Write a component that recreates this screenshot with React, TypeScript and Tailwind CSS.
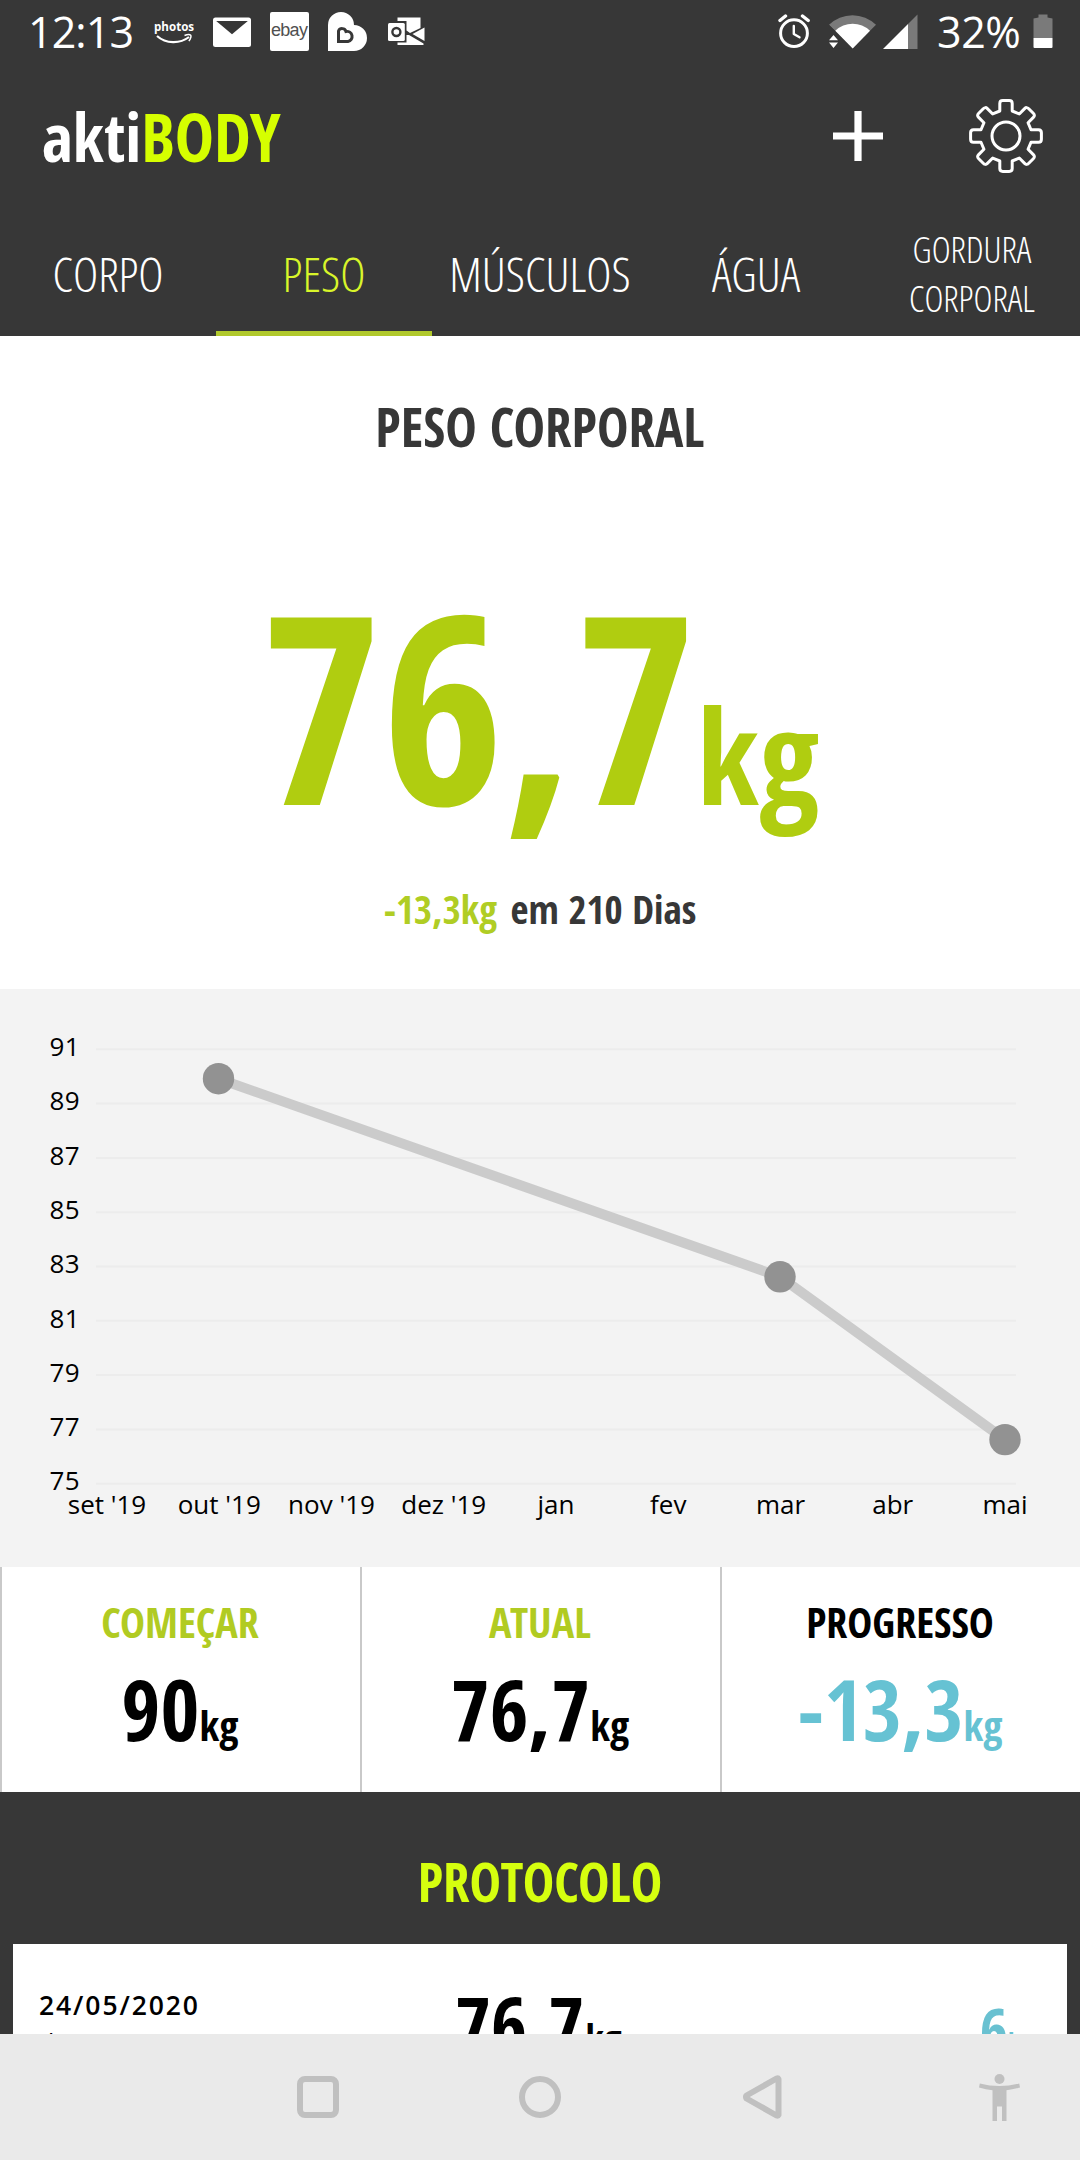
import type { ReactNode } from 'react'

const tabs = [
  { label: 'CORPO' },
  { label: 'PESO', active: true },
  { label: 'MÚSCULOS' },
  { label: 'ÁGUA' },
  { label: 'GORDURA CORPORAL', small: true },
]

const months = ["set '19", "out '19", "nov '19", "dez '19", 'jan', 'fev', 'mar', 'abr', 'mai']
const levels = [91, 89, 87, 85, 83, 81, 79, 77, 75]
const points = [
  { x: 218.5, y: 89.7 },
  { x: 780, y: 287.8 },
  { x: 1005, y: 450.6 },
]

// Outline of an eight-toothed cog centred on 0,0
function gearPath() {
  const tooth = [
    [-6.2, -25],
    [-6.2, -32.5],
    [-6.2, -35.4],
    [-3.2, -35.4],
    [3.2, -35.4],
    [6.2, -35.4],
    [6.2, -32.5],
    [6.2, -25],
  ]
  let d = ''
  for (let i = 0; i < 8; i++) {
    const a = (i * Math.PI) / 4
    const p = tooth.map(([x, y]) =>
      `${(x * Math.cos(a) - y * Math.sin(a)).toFixed(2)} ${(x * Math.sin(a) + y * Math.cos(a)).toFixed(2)}`
    )
    d += `${i === 0 ? 'M' : 'L'}${p[0]}L${p[1]}Q${p[2]} ${p[3]}L${p[4]}Q${p[5]} ${p[6]}L${p[7]}`
  }
  return d + 'Z'
}

function StatusBar() {
  return (
    <div className="flex h-16 items-center pl-[28px] pr-[27px] font-['Open_Sans'] text-[43px] text-white">
      <span className="w-[126px] font-[370] tracking-[-0.9px]">12:13</span>
      <div className="flex items-center gap-[19px]">
        <svg className="w-[40px] h-[40px] overflow-visible" viewBox="0 0 40 40" fill="none">
          <text x="0" y="19" fontFamily="Open Sans" fontWeight="700" fontSize="11.6" fill="#fff">photos</text>
          <path d="M3 24C12 32 26 32 35 25" stroke="#fff" strokeWidth="2.2" />
          <path d="M30.5 23.5c3-1.2 5.500-1 6.200-.3.6 1-.3 3.800-1.800 6" stroke="#fff" strokeWidth="1.500" />
        </svg>
        <svg className="w-[38px] h-[40px]" viewBox="0 0 38 40">
          <rect x="0" y="5.500" width="38" height="29.500" rx="2.500" fill="#fff" />
          <path d="M3.200 9h31.600L19 22.300z" fill="#373737" />
        </svg>
        <svg className="w-[39px] h-[40px]" viewBox="0 0 39 40">
          <rect width="39" height="39" rx="2" fill="#fff" />
          <text x="1" y="23.500" fontFamily="Liberation Sans" fontSize="18" letterSpacing="-0.7" fill="#505050">ebay</text>
        </svg>
        <svg className="w-[39px] h-[40px]" viewBox="0 0 39 40">
          <path d="M0 39V13A13 13 0 0 1 26 13A13 13 0 0 1 26 39Z" fill="#fff" />
          <path d="M10.500 29.500V19A4 4 0 0 1 18 19.500A5 5 0 0 1 20 29.500Z" fill="none" stroke="#373737" strokeWidth="3" />
        </svg>
        <svg className="ml-[2px] w-[37px] h-[40px]" viewBox="0 0 37 40">
          <path d="M9.500 9V5.500H32.500V16L22 21L18.500 18.500V9Z" fill="#fff" />
          <path d="M36.500 15.500V29L24.500 22Z" fill="#fff" />
          <path d="M9.500 30.500H18.500V23L21 23L35.500 31.500V33H9.500Z" fill="#fff" />
          <rect x="0" y="11" width="16.800" height="18" rx="1.500" fill="#fff" />
          <circle cx="8.400" cy="20" r="4" fill="none" stroke="#373737" strokeWidth="2.400" />
        </svg>
      </div>
      <svg className="ml-auto w-[33px] h-[40px]" viewBox="0 0 33 40" fill="none" stroke="#fff" strokeLinecap="round">
        <circle cx="16" cy="21.200" r="13.400" strokeWidth="3" />
        <path d="M2 8.500L7.500 4M24.500 4L30.200 8.500" strokeWidth="3.400" />
        <path d="M15.800 14V22L21.500 25.300" strokeWidth="2.400" strokeLinejoin="round" />
      </svg>
      <svg className="ml-[18px] w-[47px] h-[40px]" viewBox="0 0 47 40" fill="#fff">
        <path d="M0 12.800A33.500 33.500 0 0 1 47 12.800L23.700 36Z" fill="#7a7a7a" />
        <path d="M0 13L23.700 36.500L0 36.500Z" fill="#373737" />
        <path d="M6.300 18.800A25 25 0 0 1 41 18.800L23.700 36.500Z" />
        <path d="M4.500 23L9 28.200H0ZM4.500 36L9 30.500H0Z" />
      </svg>
      <svg className="ml-[7px] w-[35px] h-[40px]" viewBox="0 0 35 40">
        <path d="M25 12L34.500 2.500V37H25Z" fill="#7a7a7a" />
        <path d="M0 37L25 12V37Z" fill="#fff" />
      </svg>
      <span className="ml-[19px] w-[85px] font-[370] tracking-[-0.4px]">32%</span>
      <svg className="ml-[11px] w-[20px] h-[40px]" viewBox="0 0 20 40">
        <path d="M0.500 6.500L5.500 5.500V2.500H14.500V5.500L19.500 6.500V26H0.500Z" fill="#7a7a7a" />
        <path d="M0.500 26H19.500V35Q19.500 36 18.500 36H1.500Q0.500 36 0.500 35Z" fill="#fff" />
      </svg>
    </div>
  )
}

function AppBar() {
  return (
    <div className="flex h-36 items-center pl-[42px] pr-[36px]">
      <h1 className="text-[66px] leading-none font-bold text-white">
        akti<span className="text-[#d6ff00]">BODY</span>
      </h1>
      <svg className="ml-auto w-[50px] h-[50px]" viewBox="0 0 50 50" stroke="#fff" strokeWidth="7.200">
        <path d="M25 0V50M0 25H50" />
      </svg>
      <svg className="ml-[85px] w-[76px] h-[76px]" viewBox="-38 -38 76 76" fill="none" stroke="#fff" strokeWidth="3" strokeLinejoin="round">
        <path d={gearPath()} />
        <circle r="14" />
      </svg>
    </div>
  )
}

function Tabs() {
  return (
    <nav className="grid h-32 grid-cols-5 font-['Open_Sans'] font-light [font-stretch:75%] text-white">
      {tabs.map((tab) => (
        <div
          key={tab.label}
          className={
            tab.active
              ? 'flex items-center justify-center border-b-[5px] border-[#b1c92c] pt-2 text-[48px] text-[#d9f52a]'
              : 'flex items-center justify-center border-b-[5px] border-transparent pt-2 text-[48px]'
          }
        >
          {tab.small ? (
            <span className="w-[140px] text-center text-[36px] leading-[49px]">{tab.label}</span>
          ) : (
            tab.label
          )}
        </div>
      ))}
    </nav>
  )
}

function WeightChart() {
  return (
    <svg className="block w-full h-[578px] bg-[#f3f3f3]" viewBox="0 0 1080 578" fontFamily="Open Sans" fontSize="26" fontWeight="370">
      {levels.map((level, i) => (
        <g key={level}>
          <line x1="96" x2="1016" y1={60.3 + i * 54.3} y2={60.3 + i * 54.3} stroke="#ececec" strokeWidth="2" />
          <text x="49.500" y={67 + i * 54.3} letterSpacing="0.5">{level}</text>
        </g>
      ))}
      {months.map((month, i) => (
        <text key={month} x={107 + i * 112.25} y="525" textAnchor="middle">{month}</text>
      ))}
      <polyline points={points.map((p) => `${p.x},${p.y}`).join(' ')} fill="none" stroke="#cbcbcb" strokeWidth="10" />
      {points.map((p) => (
        <circle key={p.x} cx={p.x} cy={p.y} r="15.700" fill="#929292" />
      ))}
    </svg>
  )
}

function Stat({ label, labelClass, valueClass, children }: {
  label: string
  labelClass: string
  valueClass: string
  children: ReactNode
}) {
  return (
    <div className="border-l-2 border-[#c9c9c9] pt-[27px] pr-[2px] text-center font-bold">
      <div className={`text-[42px] leading-[56px] ${labelClass}`}>{label}</div>
      <div className={`mt-[17px] text-[84px] leading-[84px] ${valueClass}`}>
        {children}
        <span className="text-[42px] leading-none">kg</span>
      </div>
    </div>
  )
}

function Protocol() {
  return (
    <section className="h-[242px] overflow-hidden bg-[#373737] pt-[54px]">
      <h2 className="text-center text-[53px] leading-[72px] font-bold text-[#d6ff0f]">PROTOCOLO</h2>
      <div className="mx-[13px] mt-[26px] flex h-[200px] items-start bg-white">
        <div className="w-[442px] pt-[43px] pl-[26px] font-['Open_Sans'] text-[26.5px] leading-[37px]">
          <div className="font-[650] tracking-[1.9px]">24/05/2020</div>
          <div className="text-[25px]">domingo - 11:12:11</div>
        </div>
        <div className="pt-[37px] text-[78px] leading-[84px] font-bold">
          76,7<span className="ml-px text-[39px] leading-none">kg</span>
        </div>
        <div className="ml-auto pt-[44px] pr-[34px] text-[61px] leading-[84px] font-bold text-[#69c1d1]">
          6<span className="text-[27px] leading-none">kg</span>
        </div>
      </div>
    </section>
  )
}

function NavigationBar() {
  return (
    <div className="flex h-[126px] items-center bg-[#eaeaea] pl-[297px]">
      <svg className="w-[42px] h-[42px]" viewBox="0 0 42 42" fill="none" stroke="#c0c0c0" strokeWidth="6">
        <rect x="3" y="3" width="36" height="36" rx="5" />
      </svg>
      <svg className="ml-[180px] w-[42px] h-[42px]" viewBox="0 0 42 42" fill="none" stroke="#c0c0c0" strokeWidth="6">
        <circle cx="21" cy="21" r="18" />
      </svg>
      <svg className="ml-[181px] w-[41px] h-[44px]" viewBox="0 0 41 44" fill="none" stroke="#c0c0c0" strokeWidth="6" strokeLinejoin="round">
        <path d="M36.500 4V40Q36 41 34.500 40.500L4.500 23.500Q3.500 22 4.500 20.500L34.500 3.500Q36 3 36.500 4Z" />
      </svg>
      <svg className="ml-[196px] w-[41px] h-[47px]" viewBox="0 0 41 47" fill="#c0c0c0">
        <circle cx="20.500" cy="5" r="5" />
        <path d="M0.800 9.500Q20.500 14.500 40.200 9.500L41 13.500Q34 15.700 27.500 16.200V47H23V32.500H18V47H13.500V16.200Q7 15.700 0 13.500Z" />
      </svg>
    </div>
  )
}

export default function App() {
  return (
    <div className="w-[1080px] h-[2160px] overflow-hidden bg-white font-['Open_Sans_Condensed','Open_Sans',sans-serif] text-black">
      <header className="bg-[#373737]">
        <StatusBar />
        <AppBar />
        <Tabs />
      </header>

      <section className="h-[653px] pt-[55px] text-center font-bold text-[#373737]">
        <h2 className="text-[53px] leading-[72px]">PESO CORPORAL</h2>
        <div className="mt-[108px] text-[263px] leading-[264px] text-[#b0cd10]">
          76,7<span className="text-[132px] leading-none">kg</span>
        </div>
        <p className="mt-12 text-[39px] leading-[52px]">
          <span className="mr-[4px] text-[#b0cd24]">-13,3kg</span> em 210 Dias
        </p>
      </section>

      <WeightChart />

      <section className="grid h-[225px] grid-cols-3">
        <Stat label="COMEÇAR" labelClass="text-[#b1cb22]" valueClass="text-black">90</Stat>
        <Stat label="ATUAL" labelClass="text-[#b1cb22]" valueClass="text-black">76,7</Stat>
        <Stat label="PROGRESSO" labelClass="text-black" valueClass="text-[#66c2d3]">-13,3</Stat>
      </section>

      <Protocol />
      <NavigationBar />
    </div>
  )
}
